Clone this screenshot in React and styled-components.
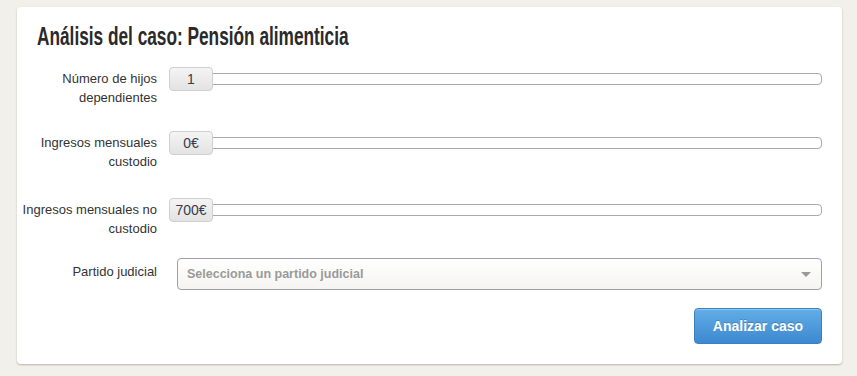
import React from 'react';
import styled, { createGlobalStyle } from 'styled-components';

const GlobalStyle = createGlobalStyle`
  html, body {
    margin: 0;
    padding: 0;
    background: #f2f0ea;
  }
  body {
    font-family: 'Liberation Sans', Arial, sans-serif;
  }
`;

const Page = styled.div`
  padding: 7px 15px 12px 17px;
`;

const Card = styled.div`
  background: #fff;
  border-radius: 4px;
  box-shadow: 0 1px 2px rgba(0, 0, 0, 0.25);
  padding: 15px 20px 20px 0;
  box-sizing: border-box;
  height: 357px;
`;

const TitleBox = styled.div`
  padding-left: 20px;
  height: 28px;
  margin-bottom: 17px;
`;

const Title = styled.h1`
  margin: 0;
  display: inline-block;
  white-space: nowrap;
  font-family: 'Liberation Sans', Arial, sans-serif;
  font-weight: bold;
  font-size: 25px;
  line-height: 28px;
  color: #2a2a2a;
  transform: scaleX(0.69);
  transform-origin: left center;
`;

const Row = styled.div`
  display: grid;
  grid-template-columns: 140px 1fr;
  column-gap: ${(p) => p.$gap || 12}px;
  margin-bottom: ${(p) => p.$mb || 0}px;
  align-items: start;
`;

const Label = styled.div`
  text-align: right;
  font-size: 13px;
  line-height: 19px;
  color: #333;
  padding-top: ${(p) => p.$pt || 2}px;
`;

const Slider = styled.div`
  display: flex;
  align-items: center;
  height: 24px;
`;

const Handle = styled.div`
  width: 44px;
  height: 24px;
  box-sizing: border-box;
  border: 1px solid #cfcfcf;
  border-radius: 4px;
  background: linear-gradient(#f4f4f4, #e3e3e3);
  display: flex;
  align-items: center;
  justify-content: center;
  font-size: 14px;
  color: #3a3a4a;
  flex-shrink: 0;
  margin-right: -1px;
  position: relative;
  z-index: 1;
`;

const Track = styled.div`
  flex: 1;
  height: 12px;
  box-sizing: border-box;
  border: 1px solid #a9a9a9;
  border-radius: 0 4px 4px 0;
  background: #fff;
`;

const Select = styled.div`
  height: 32px;
  box-sizing: border-box;
  border: 1px solid #9e9eae;
  border-radius: 4px;
  background: linear-gradient(#ffffff, #f5f4f1);
  display: flex;
  align-items: center;
  justify-content: space-between;
  padding: 0 10px 0 9px;
  font-size: 12.5px;
  font-weight: bold;
  color: #9a9a9a;
`;

const Caret = styled.span`
  width: 0;
  height: 0;
  border-left: 5px solid transparent;
  border-right: 5px solid transparent;
  border-top: 5px solid #999;
`;

const Actions = styled.div`
  display: flex;
  justify-content: flex-end;
  margin-top: 18px;
`;

const Button = styled.button`
  width: 128px;
  height: 36px;
  border: 1px solid #3a7fc0;
  border-radius: 4px;
  background: linear-gradient(#62aee6, #3d88d0);
  color: #fff;
  font-family: 'Liberation Sans', Arial, sans-serif;
  font-weight: bold;
  font-size: 14px;
  text-shadow: 0 -1px 0 rgba(0, 0, 0, 0.2);
  box-shadow: inset 0 1px 0 rgba(255, 255, 255, 0.3);
  cursor: pointer;
`;

const sliders = [
  { label: ['Número de hijos', 'dependientes'], value: '1', mb: 24 },
  { label: ['Ingresos mensuales', 'custodio'], value: '0€', mb: 27 },
  { label: ['Ingresos mensuales no', 'custodio'], value: '700€', mb: 20 },
];

export default function App() {
  return (
    <Page>
      <GlobalStyle />
      <Card>
        <TitleBox>
          <Title>Análisis del caso: Pensión alimenticia</Title>
        </TitleBox>
        {sliders.map((s) => (
          <Row key={s.value} $mb={s.mb}>
            <Label>
              {s.label[0]}
              <br />
              {s.label[1]}
            </Label>
            <Slider>
              <Handle>{s.value}</Handle>
              <Track />
            </Slider>
          </Row>
        ))}
        <Row $gap={20}>
          <Label $pt={4}>Partido judicial</Label>
          <Select>
            <span>Selecciona un partido judicial</span>
            <Caret />
          </Select>
        </Row>
        <Actions>
          <Button>Analizar caso</Button>
        </Actions>
      </Card>
    </Page>
  );
}
